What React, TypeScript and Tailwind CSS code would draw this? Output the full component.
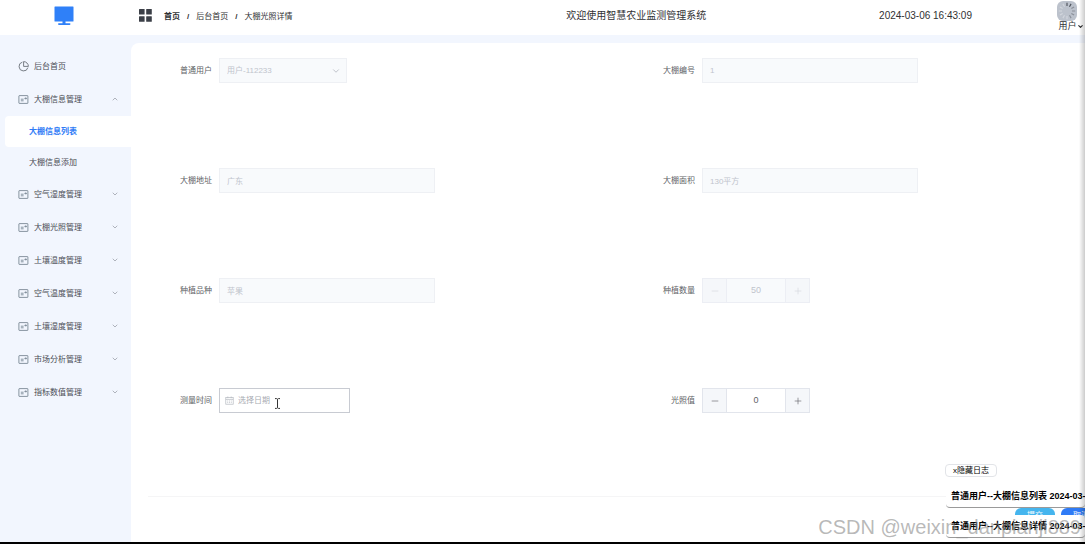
import { useState } from 'react';
import { ChevronDown, ChevronUp, Minus, Plus } from 'lucide-react';

const menus = [
  {
    title: '大棚信息管理',
    open: true,
    children: [
      { title: '大棚信息列表', active: true },
      { title: '大棚信息添加', active: false },
    ],
  },
  { title: '空气湿度管理' },
  { title: '大棚光照管理' },
  { title: '土壤温度管理' },
  { title: '空气温度管理' },
  { title: '土壤湿度管理' },
  { title: '市场分析管理' },
  { title: '指标数值管理' },
];

const logs = [
  '普通用户--大棚信息列表 2024-03-06 16:42:58',
  '普通用户--大棚信息详情 2024-03-06 16:43:02',
];

const ticks = [0, 30, 60, 90, 120, 150, 180, 210, 240, 270, 300, 330];

function MonitorIcon() {
  return (
    <svg viewBox="0 0 20 20" className="w-5 h-5" fill="#2f80f8">
      <rect x="0.5" y="0.5" width="19" height="15" rx="0.5" />
      <rect x="8.5" y="15" width="3" height="3" />
      <rect x="4" y="17.3" width="12.5" height="1.6" rx="0.8" />
    </svg>
  );
}

function GridIcon() {
  return (
    <svg viewBox="0 0 13 13" className="w-[13px] h-[13px]" fill="#3b3f47">
      <rect x="0" y="0" width="5.6" height="5.6" rx="0.5" />
      <rect x="7.2" y="0" width="5.6" height="5.6" rx="0.5" />
      <rect x="0" y="7.2" width="5.6" height="5.6" rx="0.5" />
      <rect x="7.2" y="7.2" width="5.6" height="5.6" rx="0.5" />
    </svg>
  );
}

function PieIcon() {
  return (
    <svg viewBox="0 0 11 11" className="w-[11px] h-[11px]" fill="none" stroke="#6b7078" strokeWidth="0.9">
      <path d="M4.4 1.1A4.5 4.5 0 1 0 9.9 6.6" />
      <path d="M5.6 0.6V5.4H10.4A4.8 4.8 0 0 0 5.6 0.6Z" />
    </svg>
  );
}

function PostcardIcon() {
  return (
    <svg viewBox="0 0 11 11" className="w-[11px] h-[11px]" fill="none" stroke="#6b7a88" strokeWidth="0.8">
      <rect x="0.9" y="1.6" width="9" height="7.8" rx="0.4" />
      <path d="M2.8 5.2H5.6M2.8 6.8H5.6M6.9 4H8.4V4.8H6.9Z" />
    </svg>
  );
}

function CalendarIcon() {
  return (
    <svg viewBox="0 0 9 9" className="w-[9px] h-[9px]" fill="none" stroke="#b4b8c0" strokeWidth="0.7">
      <rect x="0.8" y="1.4" width="7.4" height="6.8" />
      <path d="M0.8 3.4H8.2M2.8 0.5V2.2M6.2 0.5V2.2M2.2 5H3.2M4 5H5M5.8 5H6.8M2.2 6.6H3.2M4 6.6H5M5.8 6.6H6.8" />
    </svg>
  );
}

function FormItem({ id, label, children }: { id: string; label: string; children: React.ReactNode }) {
  return (
    <div className="flex items-center gap-[7px]">
      <label htmlFor={id} className="w-16 shrink-0 text-right text-[#606266]">
        {label}
      </label>
      {children}
    </div>
  );
}

function TextField({ id, value }: { id: string; value: string }) {
  return (
    <input
      id={id}
      value={value}
      readOnly
      disabled
      className="w-[216px] h-[25px] px-[7px] border border-[#eef0f4] bg-[#f8fafc] text-[#c0c4cc]"
    />
  );
}

function NumberField({ id, initial, disabled }: { id: string; initial: number; disabled?: boolean }) {
  const [value, setValue] = useState(initial);
  const tone = disabled ? 'border-[#eceef4] text-[#d4d7de]' : 'border-[#e2e5ec] text-[#606266]';

  return (
    <div className={`flex w-[108px] h-[25px] border ${tone}`}>
      <button
        type="button"
        aria-label="减少"
        disabled={disabled}
        onClick={() => setValue(value - 1)}
        className="w-6 flex items-center justify-center bg-[#f5f7fa] border-r border-inherit"
      >
        <Minus size={10} strokeWidth={1.5} />
      </button>
      <input
        id={id}
        value={value}
        disabled={disabled}
        onChange={(e) => setValue(Number(e.target.value) || 0)}
        className="flex-1 min-w-0 text-center text-[9px] bg-white disabled:bg-[#f8fafc] disabled:text-[#c0c4cc]"
      />
      <button
        type="button"
        aria-label="增加"
        disabled={disabled}
        onClick={() => setValue(value + 1)}
        className="w-6 flex items-center justify-center bg-[#f5f7fa] border-l border-inherit"
      >
        <Plus size={10} strokeWidth={1.5} />
      </button>
    </div>
  );
}

function Header() {
  return (
    <header className="flex items-center h-[35px] bg-white text-[#303133]">
      <div className="w-[131px] shrink-0 flex justify-center pr-1 pb-1">
        <MonitorIcon />
      </div>
      <div className="flex-1 flex items-center min-w-0 h-full">
        <div className="w-[45%] pl-2 pb-1 flex items-center">
          <button type="button" aria-label="菜单" className="mr-3">
            <GridIcon />
          </button>
          <nav className="flex items-center gap-[7px] pt-0.5 text-[8px] whitespace-nowrap">
            <a href="#home" className="font-bold">首页</a>
            <span className="font-bold">/</span>
            <a href="#dashboard">后台首页</a>
            <span className="font-bold">/</span>
            <span>大棚光照详情</span>
          </nav>
        </div>
        <p className="w-[33%] pl-1.5 pb-1 text-[10px] whitespace-nowrap">欢迎使用智慧农业监测管理系统</p>
        <p className="flex-1 pl-1 pb-1 text-[10px] whitespace-nowrap">2024-03-06 16:43:09</p>
        <button type="button" className="flex flex-col items-center h-full w-7 pt-px text-[9px] leading-[11px]">
          <svg viewBox="0 0 20 20" className="w-5 h-5 shrink-0 mr-2 rounded-md bg-[#bcc2cc]">
            {ticks.map((angle, i) => (
              <path
                key={angle}
                d="M10 1.8V5"
                transform={`rotate(${angle} 10 10)`}
                stroke={i < 2 ? '#4b5058' : i < 6 ? '#8b9099' : '#d3d7de'}
                strokeWidth="1.1"
              />
            ))}
          </svg>
          <span className="flex items-center whitespace-nowrap">
            用户
            <ChevronDown size={7} strokeWidth={4} />
          </span>
        </button>
      </div>
    </header>
  );
}

function Sidebar() {
  return (
    <aside className="w-[131px] shrink-0 pt-[15px] text-[8px] text-[#4a4d55]">
      <a href="#dashboard" className="flex items-center h-[33px] pl-[18px] gap-[5px]">
        <PieIcon />
        后台首页
      </a>
      {menus.map((menu) => (
        <div key={menu.title}>
          <button type="button" className="flex items-center w-full h-[33px] pl-[18px] pr-3 gap-[5px]">
            <PostcardIcon />
            {menu.title}
            <span className="ml-auto pb-0.5 text-[#8d919a]">
              {menu.open ? <ChevronUp size={8} strokeWidth={2} /> : <ChevronDown size={8} strokeWidth={2} />}
            </span>
          </button>
          {menu.children?.map((child) => (
            <a
              key={child.title}
              href="#greenhouse"
              className={
                child.active
                  ? 'flex items-center h-[31px] ml-[5px] pl-6 rounded-l bg-white text-[#2f7bf6] font-bold'
                  : 'flex items-center h-[31px] ml-[5px] pl-6'
              }
            >
              {child.title}
            </a>
          ))}
        </div>
      ))}
    </aside>
  );
}

function LogPanel() {
  const [open, setOpen] = useState(true);

  return (
    <div className="absolute right-0 bottom-0.5 w-[140px] h-[76px] flex flex-col items-start text-black">
      <button
        type="button"
        onClick={() => setOpen(!open)}
        className="h-[13px] px-[7px] rounded-sm border border-[#e2e4e8] bg-white text-[8px] leading-[11px] whitespace-nowrap"
      >
        x隐藏日志
      </button>
      {open && (
        <div className="flex flex-col gap-[7px] w-full mt-2 pl-px">
          {logs.map((log) => (
            <p
              key={log}
              className="h-[23px] pl-[5px] overflow-hidden rounded-sm border-b border-[#9a9a9a] bg-white text-[9px] leading-[22px] font-bold whitespace-nowrap"
            >
              {log}
            </p>
          ))}
        </div>
      )}
    </div>
  );
}

export default function App() {
  return (
    <div className="relative flex flex-col min-h-screen overflow-hidden border-b-2 border-black bg-[#f2f6fe] font-['Liberation_Sans','Noto_Sans_CJK_SC',sans-serif]">
      <Header />
      <div className="flex flex-1">
        <Sidebar />
        <main className="flex-1 min-w-0 mt-2 pt-[15px] pl-[17px] rounded-tl-lg bg-white text-[8px]">
          {/* the form is a little wider than the card, its right edge is cut off */}
          <form className="-mr-[29px]" onSubmit={(e) => e.preventDefault()}>
            <div className="grid grid-cols-2 gap-y-[85px]">
              <FormItem id="user" label="普通用户">
                <div className="relative flex items-center">
                  <select
                    id="user"
                    disabled
                    className="w-32 h-[25px] px-[7px] appearance-none border border-[#eef0f4] bg-[#f8fafc] text-[#c0c4cc] opacity-100"
                  >
                    <option>用户-112233</option>
                  </select>
                  <ChevronDown size={10} className="absolute right-1.5 text-[#b4b8c0]" />
                </div>
              </FormItem>
              <FormItem id="code" label="大棚编号">
                <TextField id="code" value="1" />
              </FormItem>
              <FormItem id="address" label="大棚地址">
                <TextField id="address" value="广东" />
              </FormItem>
              <FormItem id="area" label="大棚面积">
                <TextField id="area" value="130平方" />
              </FormItem>
              <FormItem id="crop" label="种植品种">
                <TextField id="crop" value="苹果" />
              </FormItem>
              <FormItem id="count" label="种植数量">
                <NumberField id="count" initial={50} disabled />
              </FormItem>
              <FormItem id="time" label="测量时间">
                <div className="relative flex items-center gap-1 w-[131px] h-[25px] px-[5px] border border-[#c8cbd2] bg-white">
                  <CalendarIcon />
                  <input
                    id="time"
                    placeholder="选择日期"
                    className="flex-1 min-w-0 outline-none placeholder:text-[#a8abb2]"
                  />
                  {/* text cursor */}
                  <svg
                    viewBox="0 0 7 11"
                    className="absolute left-[54px] top-[9px] w-[7px] h-[11px]"
                    fill="none"
                    stroke="#333"
                    strokeWidth="1"
                  >
                    <path d="M1 0.6H2.6L3.5 1.2L4.4 0.6H6M3.5 1.2V9.8M1 10.4H2.6L3.5 9.8L4.4 10.4H6" />
                  </svg>
                </div>
              </FormItem>
              <FormItem id="light" label="光照值">
                <NumberField id="light" initial={0} />
              </FormItem>
            </div>
            <div className="flex justify-end gap-1.5 mt-[83px] pt-[11px] pr-[13px] border-t border-[#f5f5f6] text-white leading-3">
              <button type="submit" className="flex justify-center w-10 h-5 pt-0.5 rounded-md bg-[#45b5ee]">提交</button>
              <button type="button" className="flex justify-center w-10 h-5 pt-0.5 rounded-md bg-[#2f7bf6]">取消</button>
            </div>
          </form>
        </main>
      </div>
      <LogPanel />
      <p className="absolute right-1 bottom-[3px] text-[20px] leading-6 text-[#8a8a8a]/60 whitespace-nowrap pointer-events-none">
        CSDN @weixin_danpianji889
      </p>
      <div className="absolute inset-y-0 right-0 w-1.5 bg-linear-to-r from-transparent to-black/20 pointer-events-none" />
    </div>
  );
}
